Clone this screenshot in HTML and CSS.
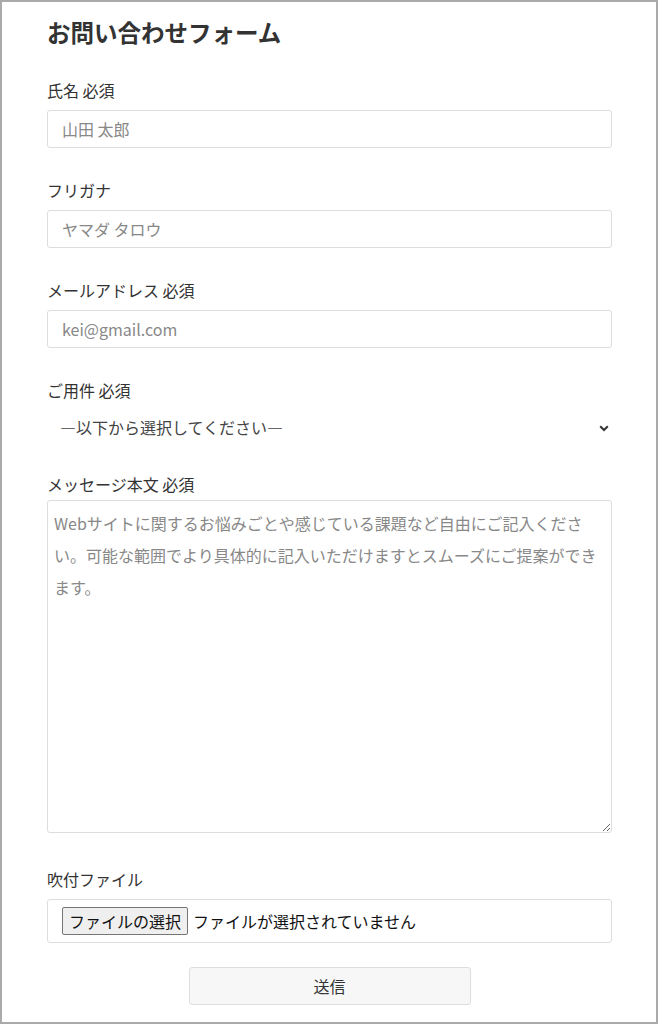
FILE: index.html
```html
<!DOCTYPE html>
<html lang="ja">
<head>
<meta charset="utf-8">
<title>お問い合わせフォーム</title>
<link rel="stylesheet" href="styles.css">
</head>
<body>
<div class="page">
  <h1 class="title">お問い合わせフォーム</h1>
  <form class="form">
    <div class="field">
      <label class="label">氏名 必須</label>
      <input class="input" type="text" placeholder="山田 太郎">
    </div>
    <div class="field">
      <label class="label">フリガナ</label>
      <input class="input" type="text" placeholder="ヤマダ タロウ">
    </div>
    <div class="field">
      <label class="label">メールアドレス 必須</label>
      <input class="input" type="text" placeholder="kei@gmail.com">
    </div>
    <div class="field">
      <label class="label">ご用件 必須</label>
      <div class="select-wrap">
        <select class="select">
          <option>―以下から選択してください―</option>
        </select>
        <svg class="chevron" width="10" height="7" viewBox="0 0 10 7"><path d="M1.2 1.2 L5 5 L8.8 1.2" fill="none" stroke="#333" stroke-width="2"/></svg>
      </div>
    </div>
    <div class="field field-msg">
      <label class="label label-msg">メッセージ本文 必須</label>
      <textarea class="textarea" placeholder="Webサイトに関するお悩みごとや感じている課題など自由にご記入ください。可能な範囲でより具体的に記入いただけますとスムーズにご提案ができます。"></textarea>
    </div>
    <div class="field field-file">
      <label class="label">吹付ファイル</label>
      <div class="filebox">
        <button type="button" class="filebtn">ファイルの選択</button>
        <span class="filetext">ファイルが選択されていません</span>
      </div>
    </div>
    <div class="actions">
      <button type="button" class="submit">送信</button>
    </div>
  </form>
</div>
</body>
</html>
```

FILE: styles.css
```css
* { box-sizing: border-box; }
html, body { margin: 0; padding: 0; background: #fff; }
body {
  font-family: "Noto Sans CJK JP", "Noto Sans", sans-serif;
  color: #333;
}
.page {
  width: 658px;
  height: 1024px;
  border: 2px solid #aaa;
  padding: 12px 44px 0 45px;
  overflow: hidden;
}
.title {
  margin: 0;
  font-size: 23.5px;
  line-height: 36px;
  font-weight: 700;
  color: #333;
}
.form {
  display: flex;
  flex-direction: column;
  margin-top: 28px;
}
.field {
  display: flex;
  flex-direction: column;
  margin-bottom: 30px;
}
.label {
  font-size: 16px;
  line-height: 24px;
  margin-bottom: 8px;
  color: #333;
}
.input {
  height: 38px;
  width: 100%;
  border: 1px solid #ddd;
  border-radius: 3px;
  padding: 0 14px;
  font-family: inherit;
  font-size: 16px;
  color: #333;
  outline: none;
}
.input::placeholder { color: #888; }
.select-wrap {
  position: relative;
  height: 34px;
}
.select {
  -webkit-appearance: none;
  appearance: none;
  width: 100%;
  height: 34px;
  border: none;
  background: transparent;
  padding: 0 13px;
  font-family: inherit;
  font-size: 16px;
  color: #444;
  outline: none;
}
.chevron {
  position: absolute;
  right: 3px;
  top: 15px;
}
.field-msg { margin-bottom: 34px; }
.form .field:nth-child(4) { margin-bottom: 28px; }
.label-msg { margin-bottom: 4px; }
.textarea {
  width: 100%;
  height: 333px;
  border: 1px solid #ddd;
  border-radius: 3px;
  padding: 6px 6px;
  font-family: inherit;
  font-size: 16px;
  line-height: 32px;
  color: #333;
  outline: none;
  resize: vertical;
}
.textarea::placeholder { color: #888; }
.field-file { margin-bottom: 24px; }
.filebox {
  height: 44px;
  border: 1px solid #ddd;
  border-radius: 3px;
  display: flex;
  align-items: center;
  padding: 0 14px;
  gap: 5px;
}
.filebtn {
  height: 28px;
  padding: 0 6px;
  border: 1px solid #767676;
  border-radius: 2px;
  background: #efefef;
  font-family: inherit;
  font-size: 16px;
  color: #111;
  line-height: 26px;
}
.filetext {
  font-size: 16px;
  color: #111;
}
.actions {
  display: flex;
  justify-content: center;
}
.submit {
  width: 282px;
  height: 38px;
  border: 1px solid #ddd;
  border-radius: 3px;
  background: #f7f7f7;
  font-family: inherit;
  font-size: 16px;
  color: #333;
}
```
